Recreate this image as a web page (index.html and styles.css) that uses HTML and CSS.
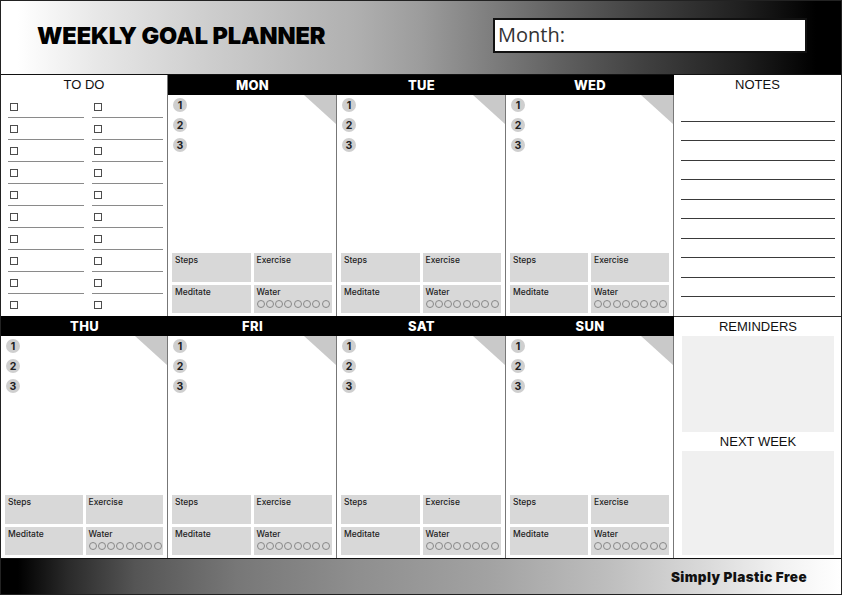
FILE: index.html
```html
<!DOCTYPE html>
<html lang="en">
<head>
<meta charset="utf-8">
<title>Weekly Goal Planner</title>
<link rel="stylesheet" href="styles.css">
</head>
<body>
<div class="page">
  <header class="top">
    <h1 class="title">WEEKLY GOAL PLANNER</h1>
    <div class="month">Month:</div>
  </header>
  <main class="board">
    <section class="todo">
      <h2 class="side-title">TO DO</h2>
      <div class="todo-cols">
        <ul class="todo-list">
          <li><span class="box"></span></li><li><span class="box"></span></li><li><span class="box"></span></li><li><span class="box"></span></li><li><span class="box"></span></li>
          <li><span class="box"></span></li><li><span class="box"></span></li><li><span class="box"></span></li><li><span class="box"></span></li><li><span class="box"></span></li>
        </ul>
        <ul class="todo-list">
          <li><span class="box"></span></li><li><span class="box"></span></li><li><span class="box"></span></li><li><span class="box"></span></li><li><span class="box"></span></li>
          <li><span class="box"></span></li><li><span class="box"></span></li><li><span class="box"></span></li><li><span class="box"></span></li><li><span class="box"></span></li>
        </ul>
      </div>
    </section>

    <section class="day">
      <h3 class="day-head">MON</h3>
      <div class="day-body">
        <span class="fold"></span>
        <ol class="goals"><li>1</li><li>2</li><li>3</li></ol>
        <div class="trackers">
          <div class="tracker">Steps</div>
          <div class="tracker">Exercise</div>
          <div class="tracker">Meditate</div>
          <div class="tracker">Water<div class="drops"><span></span><span></span><span></span><span></span><span></span><span></span><span></span><span></span></div></div>
        </div>
      </div>
    </section>

    <section class="day">
      <h3 class="day-head">TUE</h3>
      <div class="day-body">
        <span class="fold"></span>
        <ol class="goals"><li>1</li><li>2</li><li>3</li></ol>
        <div class="trackers">
          <div class="tracker">Steps</div>
          <div class="tracker">Exercise</div>
          <div class="tracker">Meditate</div>
          <div class="tracker">Water<div class="drops"><span></span><span></span><span></span><span></span><span></span><span></span><span></span><span></span></div></div>
        </div>
      </div>
    </section>

    <section class="day">
      <h3 class="day-head">WED</h3>
      <div class="day-body">
        <span class="fold"></span>
        <ol class="goals"><li>1</li><li>2</li><li>3</li></ol>
        <div class="trackers">
          <div class="tracker">Steps</div>
          <div class="tracker">Exercise</div>
          <div class="tracker">Meditate</div>
          <div class="tracker">Water<div class="drops"><span></span><span></span><span></span><span></span><span></span><span></span><span></span><span></span></div></div>
        </div>
      </div>
    </section>

    <section class="notes">
      <h2 class="side-title">NOTES</h2>
      <div class="note-lines">
        <div></div><div></div><div></div><div></div><div></div>
        <div></div><div></div><div></div><div></div><div></div>
      </div>
    </section>

    <section class="day">
      <h3 class="day-head">THU</h3>
      <div class="day-body">
        <span class="fold"></span>
        <ol class="goals"><li>1</li><li>2</li><li>3</li></ol>
        <div class="trackers">
          <div class="tracker">Steps</div>
          <div class="tracker">Exercise</div>
          <div class="tracker">Meditate</div>
          <div class="tracker">Water<div class="drops"><span></span><span></span><span></span><span></span><span></span><span></span><span></span><span></span></div></div>
        </div>
      </div>
    </section>

    <section class="day">
      <h3 class="day-head">FRI</h3>
      <div class="day-body">
        <span class="fold"></span>
        <ol class="goals"><li>1</li><li>2</li><li>3</li></ol>
        <div class="trackers">
          <div class="tracker">Steps</div>
          <div class="tracker">Exercise</div>
          <div class="tracker">Meditate</div>
          <div class="tracker">Water<div class="drops"><span></span><span></span><span></span><span></span><span></span><span></span><span></span><span></span></div></div>
        </div>
      </div>
    </section>

    <section class="day">
      <h3 class="day-head">SAT</h3>
      <div class="day-body">
        <span class="fold"></span>
        <ol class="goals"><li>1</li><li>2</li><li>3</li></ol>
        <div class="trackers">
          <div class="tracker">Steps</div>
          <div class="tracker">Exercise</div>
          <div class="tracker">Meditate</div>
          <div class="tracker">Water<div class="drops"><span></span><span></span><span></span><span></span><span></span><span></span><span></span><span></span></div></div>
        </div>
      </div>
    </section>

    <section class="day">
      <h3 class="day-head">SUN</h3>
      <div class="day-body">
        <span class="fold"></span>
        <ol class="goals"><li>1</li><li>2</li><li>3</li></ol>
        <div class="trackers">
          <div class="tracker">Steps</div>
          <div class="tracker">Exercise</div>
          <div class="tracker">Meditate</div>
          <div class="tracker">Water<div class="drops"><span></span><span></span><span></span><span></span><span></span><span></span><span></span><span></span></div></div>
        </div>
      </div>
    </section>

    <section class="side">
      <h2 class="side-title">REMINDERS</h2>
      <div class="memo memo-reminders"></div>
      <h2 class="side-title">NEXT WEEK</h2>
      <div class="memo memo-next"></div>
    </section>
  </main>
  <footer class="bottom">
    <span class="brand">Simply Plastic Free</span>
  </footer>
</div>
</body>
</html>
```

FILE: styles.css
```css
* { box-sizing: border-box; margin: 0; padding: 0; }
html, body { width: 842px; height: 595px; overflow: hidden; background: #fff; }
body { font-family: "Liberation Sans", Arial, sans-serif; color: #111; }

.page {
  width: 842px;
  height: 595px;
  border: 1px solid #222;
  display: flex;
  flex-direction: column;
}

/* header */
.top {
  height: 74px;
  flex: none;
  border-bottom: 1px solid #111;
  display: flex;
  align-items: center;
  justify-content: space-between;
  padding: 0 34px 4px 36px;
  background: linear-gradient(to right, #fff 2%, #e6e6e6 12%, #cdcdcd 25%, #b0b0b0 42%, #9c9c9c 50%, #868686 56%, #626262 66%, #424242 76%, #202020 88%, #000 97%);
}
.title {
  font-family: Inter, "Liberation Sans", sans-serif;
  font-weight: 900;
  font-size: 23.5px;
  letter-spacing: -0.1px;
  color: #000;
}
.month {
  width: 314px;
  height: 35px;
  border: 2px solid #111;
  background: #fff;
  font-family: "Open Sans", sans-serif;
  font-weight: 400;
  font-size: 20px;
  line-height: 30px;
  padding-left: 3px;
  color: #333;
}

/* board */
.board {
  flex: none;
  display: grid;
  grid-template-columns: 167px 169px 169px 168px 167px;
  grid-template-rows: 241px 242px;
}

.side-title {
  font-family: "Liberation Sans", Arial, sans-serif;
  font-weight: 400;
  font-size: 13px;
  text-align: center;
  height: 20px;
  line-height: 20px;
  color: #111;
}

/* to do */
.todo { border-right: 1px solid #777; }
.todo-cols {
  display: grid;
  grid-template-columns: 76px 71px;
  column-gap: 8px;
  padding: 1px 0 0 7px;
}
.todo-list { list-style: none; }
.todo-list li {
  height: 22px;
  border-bottom: 1px solid #8a8a8a;
  display: flex;
  align-items: center;
  padding-left: 2px;
}
.todo-list li:last-child { border-bottom: 0; }
.box {
  width: 8px;
  height: 8px;
  border: 1.5px solid #4d4d4d;
}

/* day cards */
.day { display: flex; flex-direction: column; }
.day-head {
  height: 20px;
  flex: none;
  background: #000;
  color: #fff;
  font-family: Inter, "Liberation Sans", sans-serif;
  font-weight: 800;
  font-size: 13px;
  letter-spacing: 0.3px;
  text-align: center;
  line-height: 20px;
}
.day-body {
  flex: 1;
  position: relative;
  border-right: 1px solid #777;
  padding: 3px 4px 3px 4px;
  display: flex;
  flex-direction: column;
  justify-content: space-between;
}
.fold {
  position: absolute;
  top: 0;
  right: 0;
  width: 32px;
  height: 29px;
  background: #c9c9c9;
  clip-path: polygon(0 0, 100% 0, 100% 100%);
}
.goals {
  list-style: none;
  display: flex;
  flex-direction: column;
  gap: 6px;
  padding-left: 1px;
}
.goals li {
  width: 14px;
  height: 14px;
  border-radius: 50%;
  background: #cfcfcf;
  font-family: Inter, "Liberation Sans", sans-serif;
  font-weight: 700;
  font-size: 10.5px;
  color: #222;
  display: flex;
  align-items: center;
  justify-content: center;
}
.trackers {
  display: grid;
  grid-template-columns: minmax(0, 1fr) minmax(0, 1fr);
  grid-template-rows: 29px 28px;
  gap: 3px;
}
.tracker {
  background: #d8d8d8;
  font-family: Inter, "Liberation Sans", sans-serif;
  font-weight: 500;
  font-size: 8.5px;
  line-height: 10px;
  padding: 2px 3px;
  color: #222;
  min-width: 0;
}
.drops { display: flex; gap: 1.3px; margin-top: 3px; }
.drops span {
  flex: none;
  width: 8px;
  height: 8px;
  border: 1px solid #888;
  border-radius: 50%;
}

/* notes */
.note-lines { padding: 7px 6px 0 7px; }
.note-lines div {
  height: 19.5px;
  border-bottom: 1px solid #3a3a3a;
}

/* side */
.side {
  border-top: 1px solid #333;
  padding: 0 7px 3px 8px;
  display: flex;
  flex-direction: column;
}
.side .side-title { height: 19px; line-height: 19px; }
.memo { background: #f0f0f0; }
.memo-reminders { height: 96px; }
.memo-next { flex: 1; }

/* footer */
.bottom {
  flex: 1;
  border-top: 1px solid #111;
  background: linear-gradient(to right, #000 2%, #2a2a2a 8%, #555 16%, #777 28%, #8e8e8e 42%, #a2a2a2 58%, #bdbdbd 72%, #dadada 84%, #f2f2f2 93%, #fff 100%);
  display: flex;
  align-items: center;
  justify-content: flex-end;
  padding-right: 34px;
}
.brand {
  font-family: Inter, "Liberation Sans", sans-serif;
  font-weight: 900;
  font-size: 13.5px;
  letter-spacing: 0.4px;
  color: #111;
}
```
